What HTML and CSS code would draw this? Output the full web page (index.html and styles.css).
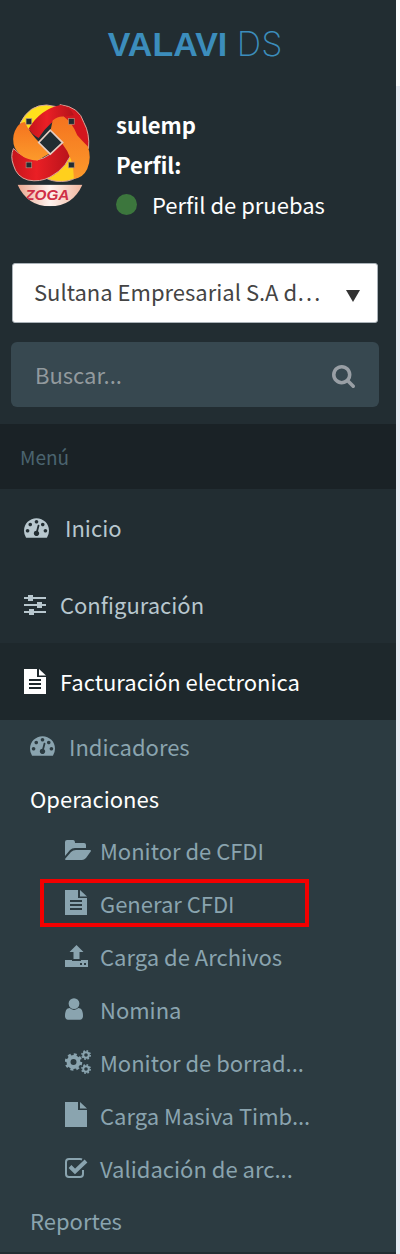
FILE: index.html
```
<!DOCTYPE html>
<html lang="es">
<head>
  <meta charset="UTF-8">
  <meta name="viewport" content="width=device-width, initial-scale=1">
  <title>VALAVI DS</title>
  <link rel="stylesheet" href="styles.css">
</head>
<body>

<!-- Icon set -->
<svg class="sprite" aria-hidden="true">
  <symbol id="i-dashboard" viewBox="0 256 1792 1408">
    <path d="M384 1152q0-53-37.5-90.5t-90.5-37.5-90.5 37.5-37.5 90.5 37.5 90.5 90.5 37.5 90.5-37.5 37.5-90.5zm192-448q0-53-37.5-90.5t-90.5-37.5-90.5 37.5-37.5 90.5 37.5 90.5 90.5 37.5 90.5-37.5 37.5-90.5zm428 481l101-382q6-26-7.5-48.5t-38.5-29.5-48 6.5-30 39.5l-101 382q-60 5-107 43.5t-63 98.5q-20 77 20 146t117 89 146-20 89-117q16-60-6-117t-72-91zm660-33q0-53-37.5-90.5t-90.5-37.5-90.5 37.5-37.5 90.5 37.5 90.5 90.5 37.5 90.5-37.5 37.5-90.5zm-640-640q0-53-37.5-90.5t-90.5-37.5-90.5 37.5-37.5 90.5 37.5 90.5 90.5 37.5 90.5-37.5 37.5-90.5zm448 192q0-53-37.5-90.5t-90.5-37.5-90.5 37.5-37.5 90.5 37.5 90.5 90.5 37.5 90.5-37.5 37.5-90.5zm320 448q0 261-141 483-19 29-54 29h-1402q-35 0-54-29-141-221-141-483 0-182 71-348t191-286 286-191 348-71 348 71 286 191 191 286 71 348z"/>
  </symbol>
  <symbol id="i-sliders" viewBox="0 0 22 20">
    <path d="M0 2h22v2H0zM0 9h22v2H0zM0 16h22v2H0z"/>
    <path d="M4 0h5v6H4zM13 7h5v6h-5zM5 14h5v6H5z"/>
  </symbol>
  <symbol id="i-file-text" viewBox="0 0 22 25">
    <path fill-rule="evenodd" d="M0 0h13v8h9v17H0zM5 10v2h12v-2zM5 14v2h12v-2zM5 18v2h12v-2z"/>
    <path d="M15 0l7 6.500h-7z"/>
  </symbol>
  <symbol id="i-file" viewBox="0 0 22 25">
    <path d="M0 0h13v8h9v17H0zM15 0l7 6.500h-7z"/>
  </symbol>
  <symbol id="i-folder" viewBox="0 0 26 20">
    <path d="M0 2q0-2 2-2h6q2 0 2 3h9q2 0 2 2v3H10q-3 0-5 2l-5 6z"/>
    <path d="M11 10h14q1 0 1 1l-5 7q-2 2-4 2H1q-1 0-1-1l6-7q2-2 5-2z"/>
  </symbol>
  <symbol id="i-upload" viewBox="0 0 23 22">
    <path d="M11.500 0l7 7h-4v7h-6V7h-4z"/>
    <path fill-rule="evenodd" d="M0 15h7v1h9v-1h7v7H0zM15 18v2h2v-2zM19 18v2h2v-2z"/>
  </symbol>
  <symbol id="i-user" viewBox="256 128 1280 1536">
    <path d="M1536 1399q0 109-62.500 187t-150.500 78h-854q-88 0-150.500-78t-62.500-187q0-85 8.500-160.500t31.500-152 58.500-131 94-89 134.500-34.500q131 128 313 128t313-128q76 0 134.500 34.500t94 89 58.500 131 31.500 152 8.500 160.500zm-256-887q0 159-112.500 271.500t-271.500 112.500-271.500-112.500-112.500-271.500 112.500-271.500 271.500-112.500 271.500 112.500 112.500 271.500z"/>
  </symbol>
  <symbol id="i-cogs" viewBox="0 0 26 24">
    <g fill="none" stroke="currentColor">
      <circle cx="8.500" cy="12" r="5" stroke-width="4"/>
      <circle cx="8.500" cy="12" r="7.500" stroke-width="2.500" stroke-dasharray="3 2.890"/>
      <circle cx="21" cy="5" r="2.800" stroke-width="2"/>
      <circle cx="21" cy="5" r="4.200" stroke-width="1.500" stroke-dasharray="1.700 1.600"/>
      <circle cx="21" cy="19" r="2.800" stroke-width="2"/>
      <circle cx="21" cy="19" r="4.200" stroke-width="1.500" stroke-dasharray="1.700 1.600"/>
    </g>
  </symbol>
  <symbol id="i-check" viewBox="0 0 23 20">
    <g fill="none" stroke="currentColor">
      <path d="M18 12v4q0 3-3 3H4q-3 0-3-3V4q0-3 3-3h11q1 0 2 .5" stroke-width="2"/>
      <path d="M5 8.500l5 5L21 3" stroke-width="4"/>
    </g>
  </symbol>
  <symbol id="i-search" viewBox="64 128 1664 1664">
    <path d="M1216 832q0-185-131.500-316.500t-316.500-131.500-316.500 131.500-131.500 316.500 131.500 316.500 316.500 131.500 316.500-131.500 131.500-316.500zm512 832q0 52-38 90t-90 38q-54 0-90-38l-343-342q-179 124-399 124-143 0-273.500-55.500t-225-150-150-225-55.500-273.500 55.500-273.500 150-225 225-150 273.500-55.500 273.500 55.500 225 150 150 225 55.500 273.500q0 220-124 399l343 343q37 37 37 90z"/>
  </symbol>
</svg>

<div class="wrapper">
  <aside class="sidebar">
    <a class="logo" href="#"><b>VALAVI</b> <span>DS</span></a>

    <div class="user-panel">
      <svg class="avatar" viewBox="33 42 237 310" role="img" aria-label="ZOGA">
        <defs>
          <linearGradient id="red" x1="0" y1="0" x2="1" y2="0">
            <stop offset="0" stop-color="#c4151c"/>
            <stop offset=".4" stop-color="#ea1f25"/>
            <stop offset="1" stop-color="#b3121a"/>
          </linearGradient>
          <linearGradient id="orange" x1="0" y1="0" x2="0" y2="1">
            <stop offset="0" stop-color="#f5731f"/>
            <stop offset="1" stop-color="#fc9a2b"/>
          </linearGradient>
          <linearGradient id="plate" x1="0" y1="0" x2="1" y2="0">
            <stop offset="0" stop-color="#eba58e"/>
            <stop offset=".5" stop-color="#fff3ee"/>
            <stop offset="1" stop-color="#f1b49c"/>
          </linearGradient>
          <clipPath id="plate-clip"><path d="M52 284H248Q218 350 150 350T52 284z"/></clipPath>
        </defs>
        <!-- woven ribbons -->
        <g stroke="#d8a79c" stroke-width="3">
          <path fill="#d3161e" d="M180 44Q238 50 252 98Q270 130 266 176L236 170L190 80z"/>
          <path fill="#ffe01c" d="M60 100Q88 44 140 45L170 50L90 120z"/>
          <path fill="#ffd01d" d="M136 264Q188 244 214 190L246 250Q220 276 185 275Q156 276 136 264z"/>
          <path fill="url(#red)" d="M40 176Q30 200 40 226Q50 262 84 271Q120 278 150 262Q206 232 220 172L186 156Q150 204 112 210Q66 204 40 176z"/>
        </g>
        <path fill="url(#orange)" d="M44 124Q54 98 74 96Q90 130 118 158L150 190L112 212Q66 212 44 174Q34 148 44 124z"/>
        <path fill="url(#red)" d="M86 116Q120 58 182 45Q212 50 222 76L190 80Q148 92 116 144Q96 136 86 116z"/>
        <path fill="url(#orange)" d="M152 120L158 92Q174 78 192 80Q218 98 232 136Q246 152 264 170Q276 206 262 238Q250 264 222 268Q222 204 186 160z"/>
        <path class="hole" stroke="#e6cdc2" stroke-width="5" d="M151 121L188 158L151 193L116 158z"/>
        <g class="hole" stroke="#b98f7d" stroke-width="2">
          <rect x="78" y="86" width="17" height="17"/>
          <rect x="206" y="86" width="17" height="17"/>
          <rect x="78" y="217" width="17" height="17"/>
          <rect x="206" y="217" width="17" height="17"/>
        </g>
        <g clip-path="url(#plate-clip)">
          <rect x="50" y="284" width="200" height="68" fill="url(#plate)"/>
          <text class="plate-text" x="142" y="331" text-anchor="middle">ZOGA</text>
        </g>
      </svg>
      <div class="user-info">
        <p><b>sulemp</b></p>
        <p><b>Perfil:</b></p>
        <p class="profile"><i class="dot"></i>Perfil de pruebas</p>
      </div>
    </div>

    <form class="filters">
      <div class="company">
        <select aria-label="Empresa">
          <option>Sultana Empresarial S.A d…</option>
        </select>
        <svg class="arrow" viewBox="0 0 14 12" aria-hidden="true"><path d="M0 0h14L7 12z"/></svg>
      </div>
      <div class="search">
        <input type="text" placeholder="Buscar..." aria-label="Buscar">
        <button type="button" aria-label="Buscar"><svg class="icon" width="23" height="23"><use href="#i-search"/></svg></button>
      </div>
    </form>

    <nav>
      <h2 class="menu-header">Menú</h2>
      <ul class="menu">
        <li><a href="#"><svg class="icon" width="25" height="20"><use href="#i-dashboard"/></svg><span class="wide">Inicio</span></a></li>
        <li><a href="#"><svg class="icon" width="22" height="20"><use href="#i-sliders"/></svg><span>Configuración</span></a></li>
        <li class="active">
          <a href="#"><svg class="icon" width="22" height="25"><use href="#i-file-text"/></svg><span>Facturación electronica</span></a>
          <ul class="submenu">
            <li><a href="#"><svg class="icon" width="25" height="20"><use href="#i-dashboard"/></svg><span>Indicadores</span></a></li>
            <li>
              <a class="current" href="#">Operaciones</a>
              <ul class="actions">
                <li><a href="#"><svg class="icon" width="26" height="20"><use href="#i-folder"/></svg><span>Monitor de CFDI</span></a></li>
                <li class="marked"><a href="#"><svg class="icon" width="22" height="25"><use href="#i-file-text"/></svg><span>Generar CFDI</span></a></li>
                <li><a href="#"><svg class="icon" width="23" height="22"><use href="#i-upload"/></svg><span>Carga de Archivos</span></a></li>
                <li><a href="#"><svg class="icon" width="18" height="22"><use href="#i-user"/></svg><span>Nomina</span></a></li>
                <li><a href="#"><svg class="icon" width="26" height="24"><use href="#i-cogs"/></svg><span>Monitor de borrad...</span></a></li>
                <li><a href="#"><svg class="icon" width="22" height="25"><use href="#i-file"/></svg><span>Carga Masiva Timb...</span></a></li>
                <li><a href="#"><svg class="icon" width="23" height="20"><use href="#i-check"/></svg><span>Validación de arc...</span></a></li>
              </ul>
            </li>
            <li><a href="#">Reportes</a></li>
          </ul>
        </li>
      </ul>
    </nav>
  </aside>
  <main class="content">
    <div class="topbar"></div>
  </main>
</div>

</body>
</html>
```
FILE: styles.css
```
*,
*::after {
  box-sizing: border-box;
}

body {
  margin: 0;
  font-family: "Noto Sans CJK SC", "Noto Sans", sans-serif;
  font-size: 22px;
  line-height: 40px;
  color: #b8c7ce;
  background: #ecf0f5;
}

ul, p, h2 {
  margin: 0;
  padding: 0;
  list-style: none;
}

a {
  color: inherit;
  text-decoration: none;
}

.sprite {
  display: none;
}

.icon {
  display: block;
  flex: none;
  fill: currentColor;
}

.wrapper {
  display: flex;
  min-height: 100vh;
}

.sidebar {
  flex: 1;
  min-width: 0;
  background: #222d32;
}

.content {
  flex: 0 0 4px;
  background: #e6eaf2;
}

.topbar {
  height: 86px;
  background: #fbfbfc;
}

/* Logo */
.logo {
  display: block;
  height: 86px;
  padding-right: 6px;
  font-family: "Liberation Sans", Arial, sans-serif;
  font-size: 34px;
  line-height: 88px;
  text-align: center;
  color: #3c8dbc;
}

.logo span {
  font-family: Inter, sans-serif;
  font-weight: 200;
}

/* User panel */
.user-panel {
  display: flex;
  gap: 26px;
  padding: 18px 11px 0;
}

.avatar {
  width: 79px;
  height: 103px;
}

.hole {
  fill: #222d32;
}

.plate-text {
  font: italic bold 46px "Liberation Sans", Arial, sans-serif;
  fill: #cf2f45;
}

.user-info {
  color: #fff;
}

.profile {
  display: flex;
  align-items: center;
  gap: 15px;
}

.dot {
  width: 21px;
  height: 21px;
  border-radius: 50%;
  background: #3c763d;
}

/* Company and search */
.filters {
  display: flex;
  flex-direction: column;
  gap: 19px;
  padding: 39px 17px 17px 11px;
}

.company {
  position: relative;
  padding: 0 1px;
}

.company select {
  display: block;
  width: 100%;
  height: 60px;
  padding: 0 50px 4px 21px;
  border: 1px solid #aab2b8;
  border-radius: 3px;
  font: inherit;
  color: #444;
  background: #fff;
  appearance: none;
}

.arrow {
  position: absolute;
  top: 27px;
  right: 19px;
  width: 14px;
  height: 12px;
  fill: #333;
  pointer-events: none;
}

.search {
  display: flex;
  height: 65px;
  border-radius: 6px;
  background: #374850;
}

.search input {
  flex: 1;
  min-width: 0;
  padding: 0 0 2px 24px;
  border: 0;
  font: inherit;
  color: #999;
  background: none;
}

.search input::placeholder {
  color: #929a9e;
  opacity: 1;
}

.search button {
  padding: 4px 24px 0;
  border: 0;
  color: #999fa5;
  background: none;
}

/* Menu */
.menu-header {
  padding-left: 20px;
  font-size: 19px;
  font-weight: normal;
  line-height: 65px;
  color: #4b646f;
  background: #1a2226;
}

.menu a {
  display: flex;
  align-items: center;
  gap: 14px;
  height: 77px;
  padding-left: 24px;
  white-space: nowrap;
}

.menu > li > a span {
  padding-bottom: 2px;
}

.menu .wide {
  padding-left: 2px;
}

.menu .active > a {
  color: #fff;
  background: #1e282c;
}

.menu .submenu {
  padding-bottom: 6px;
  color: #8aa4af;
  background: #2c3b41;
}

.menu .submenu a {
  height: 52px;
  padding-left: 30px;
}

.menu .submenu .current {
  color: #fff;
}

.menu .actions {
  margin-top: -1px;
}

.menu .actions a {
  display: grid;
  grid-template-columns: 26px auto;
  gap: 9px;
  height: 53px;
  padding-left: 65px;
}

.marked {
  position: relative;
}

.marked::after {
  content: "";
  position: absolute;
  top: 3px;
  left: 40px;
  right: 87px;
  height: 48px;
  border: 4px solid #f30000;
  pointer-events: none;
}
```
